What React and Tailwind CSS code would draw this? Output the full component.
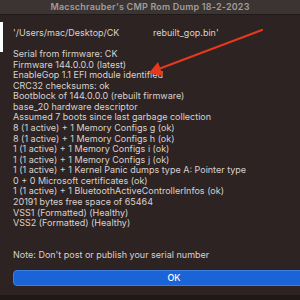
import React from 'react';

const lines = [
  'Serial from firmware: CK',
  'Firmware 144.0.0.0 (latest)',
  'EnableGop 1.1 EFI module identified',
  'CRC32 checksums: ok',
  'Bootblock of 144.0.0.0 (rebuilt firmware)',
  'base_20 hardware descriptor',
  'Assumed 7 boots since last garbage collection',
  '8 (1 active) + 1 Memory Configs g (ok)',
  '8 (1 active) + 1 Memory Configs h (ok)',
  '1 (1 active) + 1 Memory Configs i (ok)',
  '1 (1 active) + 1 Memory Configs j (ok)',
  '1 (1 active) + 1 Kernel Panic dumps type A: Pointer type',
  '0 + 0 Microsoft certificates (ok)',
  '1 (1 active) + 1 BluetoothActiveControllerInfos (ok)',
  '20191 bytes free space of 65464',
  'VSS1 (Formatted) (Healthy)',
  'VSS2 (Formatted) (Healthy)',
];

const App = () => {
  return (
    <div className="relative w-[300px] h-[300px] overflow-hidden bg-[#2d2322] font-['Inter','Liberation_Sans',sans-serif]">
      {/* title bar */}
      <div className="h-[15px] bg-[#3a3433] border-b border-[#221a19] flex items-center justify-center">
        <span className="text-[9px] font-semibold text-[#a29c9a] tracking-[0.2px]">
          Macschrauber's CMP Rom Dump 18-2-2023
        </span>
      </div>

      {/* edge of the window behind */}
      <div className="absolute left-0 top-[22px] w-[3px] h-[30px] bg-white" />

      <div className="pl-[13px] pt-[13px] text-[9px] leading-[10.56px] text-[#d8d2d0]">
        <div className="flex">
          <span className="w-[140px]">'/Users/mac/Desktop/CK</span>
          <span>rebuilt_gop.bin'</span>
        </div>
        <div className="h-[10.56px]" />
        {lines.map((line, i) => (
          <div key={i} className="whitespace-nowrap">{line}</div>
        ))}
        <div className="h-[21.12px]" />
        <div className="whitespace-nowrap">Note: Don't post or publish your serial number</div>

        <div className="mt-[10px] w-[322px] h-[16px] rounded-[4px] bg-[#1b64d8] border border-[#3d7fe0] flex items-center justify-center text-white text-[9px] font-medium">
          OK
        </div>
      </div>

      {/* bottom edge of the window */}
      <div className="absolute left-0 bottom-0 w-full h-[5px] bg-[#1e1918]" />

      {/* red arrow */}
      <svg className="absolute left-0 top-0" width="300" height="300">
        <line x1="262" y1="30" x2="156" y2="70" stroke="#e5381c" strokeWidth="2.2" strokeLinecap="round" />
        <polygon points="149,73 158,62 163,76" fill="#e5381c" />
      </svg>
    </div>
  );
};

export default App;
